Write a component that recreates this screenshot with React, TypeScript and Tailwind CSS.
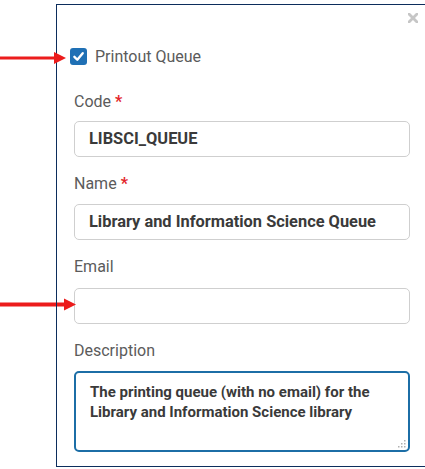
import React from "react";

function Label({ text, required }: { text: string; required?: boolean }) {
  return (
    <div className="h-[20px] leading-[20px] text-[16px] text-[#5b5b5b] flex items-center">
      <span>{text}</span>
      {required && <span className="ml-[4px] text-[#e3262b] font-bold">*</span>}
    </div>
  );
}

function Input({ value, className = "" }: { value?: string; className?: string }) {
  return (
    <div
      className={`w-[336px] h-[36px] rounded-[5px] border border-[#cfcfcf] bg-white flex items-center pl-[14px] text-[16.4px] font-bold text-[#3a3a3a] ${className}`}
    >
      {value}
    </div>
  );
}

export default function App() {
  return (
    <div
      className="relative w-[425px] h-[469px] bg-white overflow-hidden"
      style={{ fontFamily: "Roboto, 'Liberation Sans', sans-serif" }}
    >
      <div className="relative ml-[56px] mt-[4px] h-[463px] w-[369px] border-l border-t border-b border-[#0c2d5c] pl-[17px] pt-[43px]">
        {/* close */}
        <svg
          className="absolute right-[7px] top-[8px]"
          width="10"
          height="10"
          viewBox="0 0 10 10"
        >
          <path d="M1 1 L9 9 M9 1 L1 9" stroke="#c6c6c6" strokeWidth="2.8" strokeLinecap="square" />
        </svg>

        <div className="flex items-center h-[17px] -ml-[4px]">
          <div className="w-[17px] h-[17px] rounded-[3px] bg-[#1f70b5] flex items-center justify-center">
            <svg width="13" height="13" viewBox="0 0 12 12">
              <path d="M2.2 6.3 L4.9 9 L9.9 3" fill="none" stroke="white" strokeWidth="2.2" strokeLinecap="round" strokeLinejoin="round" />
            </svg>
          </div>
          <span className="ml-[8px] text-[16px] leading-[20px] text-[#5b5b5b]">Printout Queue</span>
        </div>

        <div className="mt-[27px]">
          <Label text="Code" required />
        </div>
        <Input value="LIBSCI_QUEUE" className="mt-[9px]" />

        <div className="mt-[17px]">
          <Label text="Name" required />
        </div>
        <Input value="Library and Information Science Queue" className="mt-[10px]" />

        <div className="mt-[17px]">
          <Label text="Email" />
        </div>
        <Input className="mt-[11px]" />

        <div className="mt-[17px]">
          <Label text="Description" />
        </div>
        <div className="relative mt-[10px] w-[336px] h-[81px] rounded-[5px] border-2 border-[#1c6ea6] bg-white pl-[14px] pt-[9px] text-[15px] leading-[20px] font-bold text-[#3a3a3a]">
          <div>The printing queue (with no email) for the</div>
          <div>Library and Information Science library</div>
          <svg className="absolute right-[2px] bottom-[2px]" width="8" height="8" viewBox="0 0 8 8">
            <rect x="6" y="0" width="1.5" height="1.5" fill="#b0b0b0" />
            <rect x="3" y="3" width="1.5" height="1.5" fill="#b0b0b0" />
            <rect x="6" y="3" width="1.5" height="1.5" fill="#b0b0b0" />
            <rect x="0" y="6" width="1.5" height="1.5" fill="#b0b0b0" />
            <rect x="3" y="6" width="1.5" height="1.5" fill="#b0b0b0" />
            <rect x="6" y="6" width="1.5" height="1.5" fill="#b0b0b0" />
          </svg>
        </div>
      </div>

      {/* arrows */}
      <svg className="absolute left-0 top-0 pointer-events-none" width="425" height="469">
        <rect x="0" y="56.5" width="56" height="3" fill="#ec1c1c" />
        <polygon points="54,52 66,58 54,64" fill="#ec1c1c" />
        <rect x="0" y="302.5" width="66" height="4" fill="#ec1c1c" />
        <polygon points="64,298.5 76,304.5 64,310.5" fill="#ec1c1c" />
        <rect x="56" y="296" width="1" height="16" fill="#0c2d5c" />
      </svg>
    </div>
  );
}
